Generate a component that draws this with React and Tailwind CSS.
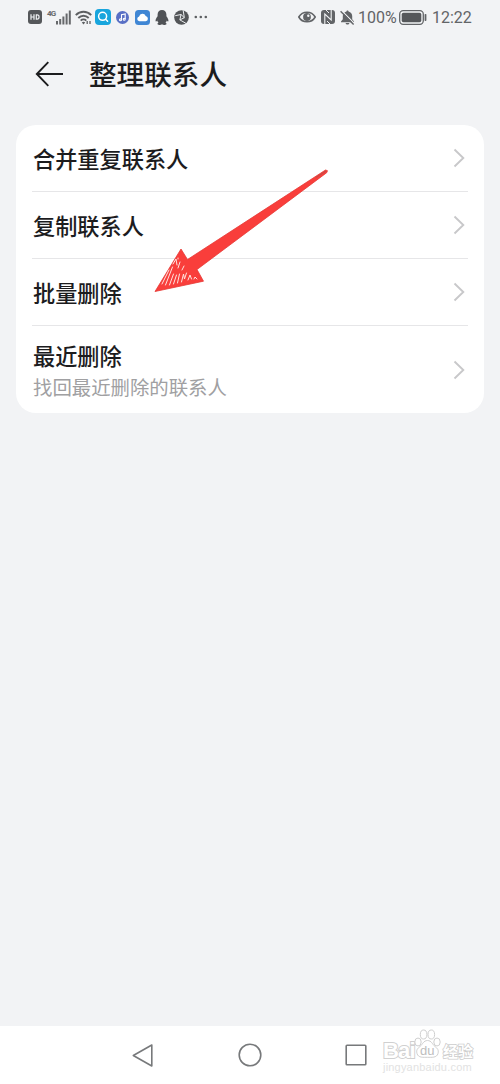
import React from 'react';

const rows = [
  { title: '合并重复联系人', height: 'h-[66px]' },
  { title: '复制联系人', height: 'h-[67px]' },
  { title: '批量删除', height: 'h-[67px]' },
  { title: '最近删除', sub: '找回最近删除的联系人', height: 'h-[88px]' },
];

const StatusIcons = () => (
  <div className="flex items-center pl-7">
    <svg className="w-[14px] h-[14px]" viewBox="0 0 14 14">
      <rect width="14" height="14" rx="3" fill="#55575a" />
      <path d="M3 4.200v5.600M6 4.200v5.600M3 7h3M8.300 4.800v4.400h.8c2.600 0 2.600-4.400 0-4.400z" fill="none" stroke="#f2f3f5" strokeWidth="1.200" />
    </svg>
    <span className="ml-[5px] w-[9px] h-[15px] text-[8px] leading-[8px] font-bold tracking-[-0.8px] text-[#66686b]">4G</span>
    <svg className="w-[15px] h-[15px]" viewBox="0 0 15 15" fill="#66686b">
      <rect x="0" y="11" width="2" height="3.500" />
      <rect x="3.200" y="9" width="2" height="5.500" />
      <rect x="6.400" y="6.500" width="2" height="8" />
      <rect x="9.600" y="3.500" width="2" height="11" />
      <rect x="12.800" y="0.500" width="2" height="14" />
    </svg>
    <svg className="ml-1 w-[18px] h-[15px]" viewBox="0 0 18 15" fill="none" stroke="#5d5f62" strokeWidth="1.900">
      <path d="M.8 5.200c4.300-4.600 11.100-4.600 15.400 0" />
      <path d="M3.300 8c3-3 7.400-3 10.400 0" />
      <path d="M5.700 10.600c1.600-1.600 4-1.600 5.600 0" />
      <path d="M8.500 14.500l-1.700-2q1.700-1.300 3.400 0z" fill="#5d5f62" stroke="none" />
      <path d="M12.200 11v3M15 11v3" strokeWidth="1.300" />
    </svg>
    <svg className="ml-[2px] w-4 h-4" viewBox="0 0 16 16">
      <rect width="16" height="16" rx="4" fill="#18a5dd" />
      <g fill="none" stroke="#fff" strokeWidth="1.500" strokeLinecap="round">
        <circle cx="7.600" cy="7.300" r="4" />
        <path d="M10.600 10.300l2 2" />
      </g>
    </svg>
    <svg className="ml-[5px] w-[13px] h-[13px]" viewBox="0 0 13 13">
      <circle cx="6.500" cy="6.500" r="6.500" fill="#586fc5" />
      <g fill="none" stroke="#fff" strokeWidth="1.100">
        <path d="M5.500 8.800V3.700l3.700-.7v5" />
        <circle cx="4.500" cy="8.800" r="1" />
        <circle cx="8.200" cy="8.200" r="1" />
      </g>
    </svg>
    <svg className="ml-[6px] w-[15px] h-[15px]" viewBox="0 0 15 15">
      <rect width="15" height="15" rx="3.500" fill="#3f86d4" />
      <path d="M4.400 11.300a2.500 2.500 0 0 1-.3-4.900 3.500 3.500 0 0 1 6.600-.4 2.700 2.700 0 0 1 0 5.300z" fill="#fff" />
    </svg>
    <svg className="ml-[5px] w-[14px] h-[15px]" viewBox="0 0 14 15" fill="#505256">
      <path d="M7 0C4.300 0 2.600 2 2.600 4.500v1.700C1.300 7.800.2 9.800.7 11.300c.3.600 1-.1 1.500-.8.200.9.700 1.600 1.300 2.200-1 .4-1.300 1-.9 1.500.7.900 3.500.9 4.400.1.900.8 3.700.8 4.400-.1.400-.5.100-1.100-.9-1.500.6-.6 1.100-1.300 1.300-2.200.5.700 1.200 1.400 1.500.8.500-1.500-.6-3.500-1.900-5.100V4.500C11.400 2 9.700 0 7 0z" />
    </svg>
    <svg className="ml-[5px] w-[15px] h-[15px]" viewBox="0 0 15 15">
      <circle cx="7.500" cy="7.500" r="7.300" fill="#535558" />
      <g fill="none" stroke="#eceef0" strokeWidth="1">
        <path d="M7 4.500l3.300 3.200-4.400 2.200z" />
        <path d="M7 4.500L1.200 5.700M10.300 7.700L9.200.4M5.900 9.900l6 3.400" />
      </g>
    </svg>
    <svg className="ml-[5px] w-[14px] h-[4px]" viewBox="0 0 14 4" fill="#5d5f62">
      <circle cx="1.800" cy="2" r="1.300" />
      <circle cx="6.800" cy="2" r="1.300" />
      <circle cx="11.800" cy="2" r="1.300" />
    </svg>
  </div>
);

const StatusRight = () => (
  <div className="flex items-center pr-7 text-[#626467]">
    <svg className="w-[18px] h-[12px]" viewBox="0 0 18 12">
      <path d="M.8 6C4.500-.4 13.500-.4 17.200 6 13.500 12.400 4.500 12.400.8 6z" fill="none" stroke="currentColor" strokeWidth="1.600" />
      <circle cx="9" cy="6" r="3.900" fill="currentColor" />
      <circle cx="10.300" cy="4.800" r="1.200" fill="#f2f3f5" />
    </svg>
    <svg className="ml-[5px] w-[14px] h-[14px]" viewBox="0 0 14 14">
      <path d="M3 0h8q3 0 3 3v8q0 3-3 3H3q-3 0-3-3V3q0-3 3-3z" fill="currentColor" />
      <path d="M3.800 14V4l6.400 6V0" fill="none" stroke="#f2f3f5" strokeWidth="1.100" />
      <path d="M5 0l3 3M6 11l3 3" stroke="#f2f3f5" />
    </svg>
    <svg className="ml-[5px] w-[15px] h-[15px]" viewBox="0 0 15 15">
      <path d="M7.500.6c-.7 0-1 .4-1 1C4 2.200 2.800 4 2.800 6v3.200L1 11.500v.8h13v-.8l-1.800-2.300V6c0-2-1.200-3.800-3.700-4.400 0-.6-.3-1-1-1zM5.600 13h3.800c-.3 2-3.500 2-3.800 0z" fill="currentColor" />
      <path d="M1.700.6l13 13.200" stroke="#f2f3f5" strokeWidth="1.200" />
      <path d="M.6 1.200L13.600 14.500" stroke="currentColor" strokeWidth="1.400" />
    </svg>
    <span className="ml-[3px] mt-[2px] w-[39px] text-[16px] leading-none whitespace-nowrap">100%</span>
    <svg className="ml-[2px] w-[28px] h-[15px]" viewBox="0 0 28 15">
      <rect x=".7" y=".7" width="23.600" height="13.600" rx="3.500" fill="none" stroke="currentColor" strokeWidth="1.300" />
      <rect x="2.700" y="2.800" width="19.600" height="9.400" rx="1.800" fill="#55575a" />
      <rect x="25.600" y="4" width="1.800" height="7" rx=".7" fill="currentColor" />
    </svg>
    <span className="ml-[5px] mt-[2px] w-[40px] text-[16px] leading-none whitespace-nowrap">12:22</span>
  </div>
);

const Chevron = () => (
  <svg className="w-[12px] h-5 mr-[3px] shrink-0" viewBox="0 0 12 20" fill="none" stroke="#c8c8ca" strokeWidth="1.900">
    <path d="M1.500 1.500L10.300 10 1.500 18.500" />
  </svg>
);

const RedArrow = () => (
  <svg className="absolute left-[150px] top-[165px] w-[182px] h-[130px] pointer-events-none" viewBox="150 165 182 130">
    <path d="M155 291.500L181 249l6.500 10.500L325.500 170l2 .7-.8 2L197 269.500l6.500 11.700z" fill="#f93e3b" stroke="#e63a36" strokeWidth=".8" strokeLinejoin="round" />
    <path
      d="M162 284l7-14M165.500 285l7-18M169.500 285l4-11M173.500 284l3-9M177.500 283l2-9M181.500 282l2-8 1 5 2-6M188 280l2-5 1.500 4M194 279l1-2 2 2M173 264l3-5 1 6M178 268l2-6M182 270l2-4M178 258v1"
      fill="none"
      stroke="#ffe3df"
      strokeWidth="1"
      strokeLinecap="round"
    />
    <path d="M316 177.500l10-6.500" stroke="#c94a45" strokeWidth="1.200" />
  </svg>
);

const Watermark = () => (
  <div className="absolute left-[383px] top-[1028px] w-[92px] h-[46px] text-white font-['Liberation_Sans',sans-serif] whitespace-nowrap">
    <span className="absolute left-0 top-[14px] text-[22px] leading-[17px] font-bold tracking-[-0.8px] [paint-order:stroke_fill] [-webkit-text-stroke:2px_#d0d0d0]">Bai</span>
    <svg className="absolute left-[31px] top-[1px] w-[27px] h-[30px]" viewBox="0 0 27 30" fill="#fff" stroke="#cfcfcf" strokeWidth="1">
      <ellipse cx="4" cy="13" rx="3.200" ry="4" />
      <ellipse cx="9.600" cy="5.500" rx="3.300" ry="4.500" />
      <ellipse cx="17.300" cy="5.500" rx="3.300" ry="4.500" />
      <ellipse cx="23" cy="13" rx="3.200" ry="4" />
      <path d="M13.500 11.500c-4 0-5 4-7.500 6s-4 3.500-3 7c1.200 4.500 6.500 3.800 10.500 3.800s9.300.7 10.500-3.800c1-3.500-.5-5-3-7s-3.500-6-7.500-6z" />
    </svg>
    <span className="absolute left-[37px] top-[16px] text-[13px] leading-[13px] text-[#bdbdbd]">du</span>
    <span className="absolute left-[60px] top-[14px] text-[15px] leading-[17px] font-bold font-['Noto_Sans_CJK_SC',sans-serif] [paint-order:stroke_fill] [-webkit-text-stroke:1.5px_#cdcdcd]">经验</span>
    <span className="absolute left-0 top-[33px] text-[11px] leading-[12px] tracking-[0.2px] text-[#e2e2e2]">jingyanbaidu.com</span>
  </div>
);

const App = () => (
  <div className="relative flex flex-col w-[500px] h-[1084px] overflow-hidden bg-[#f2f3f5] font-['Noto_Sans_CJK_SC',sans-serif] text-[#1c1c1e]">
    <div className="flex justify-between h-[34px] font-['Roboto',sans-serif]">
      <StatusIcons />
      <StatusRight />
    </div>

    <div className="flex items-center h-[79px] pl-[35px]">
      <svg className="w-[29px] h-[26px]" viewBox="0 0 29 26" fill="none" stroke="#1c1c1e" strokeWidth="1.900">
        <path d="M28 13H2M13.300 1.200L1.800 13l11.500 11.800" />
      </svg>
      <h1 className="ml-[25px] mt-px text-[27.600px] leading-none font-medium">整理联系人</h1>
    </div>

    <div className="mt-3 mx-4 px-4 rounded-[20px] bg-white">
      {rows.map((row, i) => (
        <div
          key={row.title}
          className={`${row.height} flex items-center justify-between ${i > 0 ? 'border-t border-[#e6e6e8]' : ''}`}
        >
          <div className={row.sub ? 'pl-px pt-[3px]' : 'pl-px'}>
            <div className="text-[22.200px] leading-[30px] font-medium">{row.title}</div>
            {row.sub && <div className="mt-px text-[19.400px] leading-[31px] text-[#a0a0a2]">{row.sub}</div>}
          </div>
          <Chevron />
        </div>
      ))}
    </div>

    <div className="mt-auto flex items-center h-[58px] bg-white pl-[131px]">
      <svg className="w-[23px] h-[25px]" viewBox="0 0 23 25" fill="none" stroke="#77797b" strokeWidth="1.600" strokeLinejoin="round">
        <path d="M20.800 2v21L2.300 12.500z" />
      </svg>
      <svg className="ml-[84px] w-[24px] h-[24px]" viewBox="0 0 24 24" fill="none" stroke="#77797b" strokeWidth="1.600">
        <circle cx="12" cy="12" r="10.800" />
      </svg>
      <svg className="ml-[83px] w-[22px] h-[22px]" viewBox="0 0 22 22" fill="none" stroke="#77797b" strokeWidth="1.600">
        <rect x="1.200" y="1.200" width="19.600" height="19.600" rx=".8" />
      </svg>
    </div>

    <RedArrow />
    <Watermark />
  </div>
);

export default App;
